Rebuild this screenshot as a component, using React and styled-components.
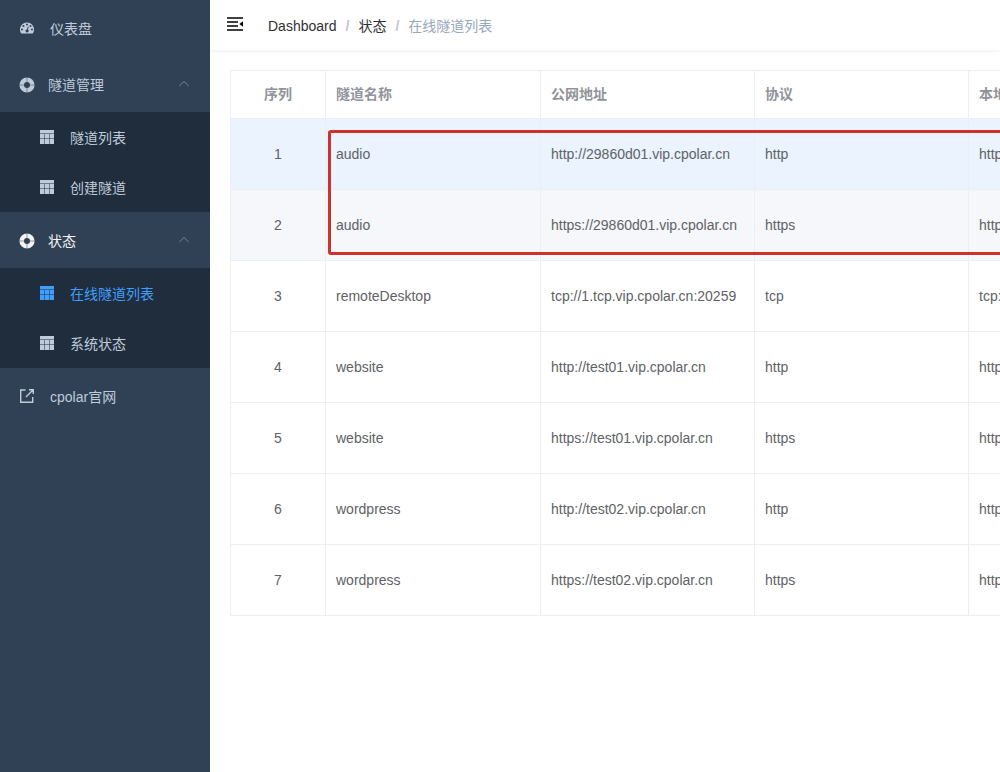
import React, { useState } from "react";
import styled, { createGlobalStyle } from "styled-components";

const columns = [
  { key: "id", title: "序列", width: 95, center: true },
  { key: "name", title: "隧道名称", width: 215 },
  { key: "publicUrl", title: "公网地址", width: 214 },
  { key: "protocol", title: "协议", width: 214 },
  { key: "localUrl", title: "本地地址", width: 214 },
];

const tunnels = [
  { id: 1, name: "audio", publicUrl: "http://29860d01.vip.cpolar.cn", protocol: "http", localUrl: "http://localhost:4533", state: "hover" },
  { id: 2, name: "audio", publicUrl: "https://29860d01.vip.cpolar.cn", protocol: "https", localUrl: "http://localhost:4533", state: "leaving" },
  { id: 3, name: "remoteDesktop", publicUrl: "tcp://1.tcp.vip.cpolar.cn:20259", protocol: "tcp", localUrl: "tcp://127.0.0.1:3389" },
  { id: 4, name: "website", publicUrl: "http://test01.vip.cpolar.cn", protocol: "http", localUrl: "http://localhost:8080" },
  { id: 5, name: "website", publicUrl: "https://test01.vip.cpolar.cn", protocol: "https", localUrl: "http://localhost:8080" },
  { id: 6, name: "wordpress", publicUrl: "http://test02.vip.cpolar.cn", protocol: "http", localUrl: "http://localhost:80" },
  { id: 7, name: "wordpress", publicUrl: "https://test02.vip.cpolar.cn", protocol: "https", localUrl: "http://localhost:80" },
];

const DashboardIcon = () => (
  <svg width="14" height="14" viewBox="0 0 28 28" aria-hidden="true">
    <path
      fill="currentColor"
      fillRule="evenodd"
      d="M14 3a14 14 0 0 0-11.8 21.5q.4.5 1 .5h21.6q.6 0 1-.5A14 14 0 0 0 14 3zM4 15a2 2 0 1 1 0 4 2 2 0 0 1 0-4zM7 8a2 2 0 1 1 0 4 2 2 0 0 1 0-4zM14 5a2 2 0 1 1 0 4 2 2 0 0 1 0-4zM21 8a2 2 0 1 1 0 4 2 2 0 0 1 0-4zM24 15a2 2 0 1 1 0 4 2 2 0 0 1 0-4zM15.6 11l1.8.5-1.5 5.8a3 3 0 1 1-1.8-.5z"
    />
  </svg>
);

const HelpIcon = () => (
  <svg width="16" height="18" viewBox="0 -2 16 18" aria-hidden="true">
    <circle cx="8" cy="8" r="5.3" fill="none" stroke="currentColor" strokeWidth="4.6" />
    <path d="M8 0v5M8 11v5M0 8h5M11 8h5" stroke="#304156" strokeWidth="0.5" />
  </svg>
);

const TableIcon = () => (
  <svg width="14" height="14" viewBox="0 0 28 28" aria-hidden="true">
    <path
      fill="currentColor"
      d="M0 0h28v7H0zM0 8h9v9H0zM0 18h9v10H0zM10 8h8v9h-8zM10 18h8v10h-8zM19 8h9v9h-9zM19 18h9v10h-9z"
    />
  </svg>
);

const LinkIcon = () => (
  <svg width="14" height="14" viewBox="0 0 14 14" fill="none" stroke="currentColor" strokeWidth="1.4" aria-hidden="true">
    <path d="M5.5 1H.7v12.3h12V8M9 .7h4.3V5M13.2.8L6 8" />
  </svg>
);

const ArrowIcon = () => (
  <svg width="12" height="12" viewBox="0 0 12 12" fill="none" stroke="currentColor" aria-hidden="true">
    <path d="M1.3 8L6 3.4 10.7 8" />
  </svg>
);

const FoldIcon = () => (
  <svg width="20" height="20" viewBox="0 0 20 20" aria-hidden="true">
    <path
      fill="currentColor"
      d="M2 2.200h16v1.600H2zM2 6.200h11v1.600H2zM2 10.200h11v1.600H2zM2 14.200h16v1.600H2zM18 6.300v5.400L14.300 9z"
    />
  </svg>
);

const SubMenu = ({ title, active, items }) => {
  const [open, setOpen] = useState(true);
  return (
    <li>
      <SubMenuTitle type="button" $active={active} aria-expanded={open} onClick={() => setOpen(!open)}>
        <HelpIcon />
        <span>{title}</span>
        <Arrow $open={open}>
          <ArrowIcon />
        </Arrow>
      </SubMenuTitle>
      {open && (
        <MenuList>
          {items.map((item) => (
            <li key={item.title}>
              <MenuLink href="#" $nested $active={item.active}>
                <TableIcon />
                {item.title}
              </MenuLink>
            </li>
          ))}
        </MenuList>
      )}
    </li>
  );
};

const App = () => {
  return (
    <>
      <GlobalStyle />
      <Layout>
        <Sidebar>
          <MenuList>
            <li>
              <MenuLink href="#">
                <DashboardIcon />
                仪表盘
              </MenuLink>
            </li>
            <SubMenu title="隧道管理" items={[{ title: "隧道列表" }, { title: "创建隧道" }]} />
            <SubMenu title="状态" active items={[{ title: "在线隧道列表", active: true }, { title: "系统状态" }]} />
            <li>
              <MenuLink href="#">
                <LinkIcon />
                cpolar官网
              </MenuLink>
            </li>
          </MenuList>
        </Sidebar>

        <Main>
          <Navbar>
            <FoldButton type="button" aria-label="折叠菜单">
              <FoldIcon />
            </FoldButton>
            <Breadcrumb>
              <a href="#">Dashboard</a>
              <Separator>/</Separator>
              <a href="#">状态</a>
              <Separator>/</Separator>
              <span>在线隧道列表</span>
            </Breadcrumb>
          </Navbar>

          <Content>
            <TableWrap>
              <Table>
                <thead>
                  <tr>
                    {columns.map((col) => (
                      <HeadCell key={col.key} scope="col" $width={col.width} $center={col.center}>
                        {col.title}
                      </HeadCell>
                    ))}
                  </tr>
                </thead>
                <tbody>
                  {tunnels.map((tunnel) => (
                    <Row key={tunnel.id} $state={tunnel.state}>
                      {columns.map((col) => (
                        <Cell key={col.key} $center={col.center}>
                          {tunnel[col.key]}
                        </Cell>
                      ))}
                    </Row>
                  ))}
                </tbody>
              </Table>
              <Highlight />
            </TableWrap>
          </Content>
        </Main>
      </Layout>
    </>
  );
};

export default App;

const GlobalStyle = createGlobalStyle`
  * {
    box-sizing: border-box;
  }
  body {
    margin: 0;
    background: #fff;
    font-family: "Liberation Sans", "Noto Sans CJK SC", sans-serif;
    font-size: 14px;
  }
  a {
    color: inherit;
    text-decoration: none;
  }
`;

const Layout = styled.div`
  display: flex;
  min-height: 100vh;
`;

const Sidebar = styled.nav`
  flex: 0 0 210px;
  background: #304156;
`;

const MenuList = styled.ul`
  margin: 0;
  padding: 0;
  list-style: none;
`;

const MenuLink = styled.a`
  display: flex;
  align-items: center;
  gap: 16px;
  height: ${(props) => (props.$nested ? "50px" : "56px")};
  padding: 0 20px 0 ${(props) => (props.$nested ? "40px" : "20px")};
  background: ${(props) => (props.$nested ? "#1f2d3d" : "transparent")};
  color: ${(props) => (props.$active ? "#409eff" : "#bfcbd9")};
`;

const SubMenuTitle = styled.button`
  display: flex;
  align-items: center;
  gap: 13px;
  width: 100%;
  height: 56px;
  padding: 0 20px 0 19px;
  border: 0;
  background: transparent;
  color: ${(props) => (props.$active ? "#f4f4f5" : "#bfcbd9")};
  font: inherit;
  cursor: pointer;
`;

const Arrow = styled.span`
  display: flex;
  margin-left: auto;
  color: #788593;
  transform: ${(props) => (props.$open ? "none" : "rotate(180deg)")};
`;

const Main = styled.main`
  flex: 1;
  min-width: 0;
  overflow: hidden;
`;

const Navbar = styled.header`
  display: flex;
  align-items: center;
  height: 50px;
  box-shadow: 0 1px 4px rgba(0, 21, 41, 0.08);
`;

const FoldButton = styled.button`
  display: flex;
  padding: 0 15px;
  border: 0;
  background: transparent;
  color: #000;
  cursor: pointer;
`;

const Breadcrumb = styled.nav`
  display: flex;
  align-items: baseline;
  margin-left: 8px;
  color: #97a8be;

  a {
    color: #303133;
  }
`;

const Separator = styled.span`
  margin: 0 9px;
  color: #c0c4cc;
  font-weight: 700;
`;

const Content = styled.section`
  padding: 20px;
`;

const TableWrap = styled.div`
  position: relative;
  width: max-content;
  min-width: 100%;
`;

const Table = styled.table`
  width: 100%;
  border-collapse: separate;
  border-spacing: 0;
  border-top: 1px solid #ebeef5;
  border-left: 1px solid #ebeef5;
  color: #606266;
`;

const HeadCell = styled.th`
  width: ${(props) => props.$width}px;
  min-width: ${(props) => props.$width}px;
  height: 48px;
  padding: 0 10px 4px;
  border-right: 1px solid #ebeef5;
  border-bottom: 1px solid #ebeef5;
  color: #909399;
  font-weight: 700;
  text-align: ${(props) => (props.$center ? "center" : "left")};
`;

const rowColors = {
  hover: "#eaf3fe",
  leaving: "#f5f7fa",
};

const Row = styled.tr`
  background: ${(props) => rowColors[props.$state] || "#fff"};
`;

const Cell = styled.td`
  height: 71px;
  padding: 0 10px;
  border-right: 1px solid #ebeef5;
  border-bottom: 1px solid #ebeef5;
  text-align: ${(props) => (props.$center ? "center" : "left")};
  white-space: nowrap;
`;

// frame around the two audio tunnels
const Highlight = styled.div`
  position: absolute;
  top: 60px;
  left: 98px;
  right: 10px;
  height: 125px;
  border: 3px solid #cf312b;
  border-radius: 3px;
  pointer-events: none;
`;
